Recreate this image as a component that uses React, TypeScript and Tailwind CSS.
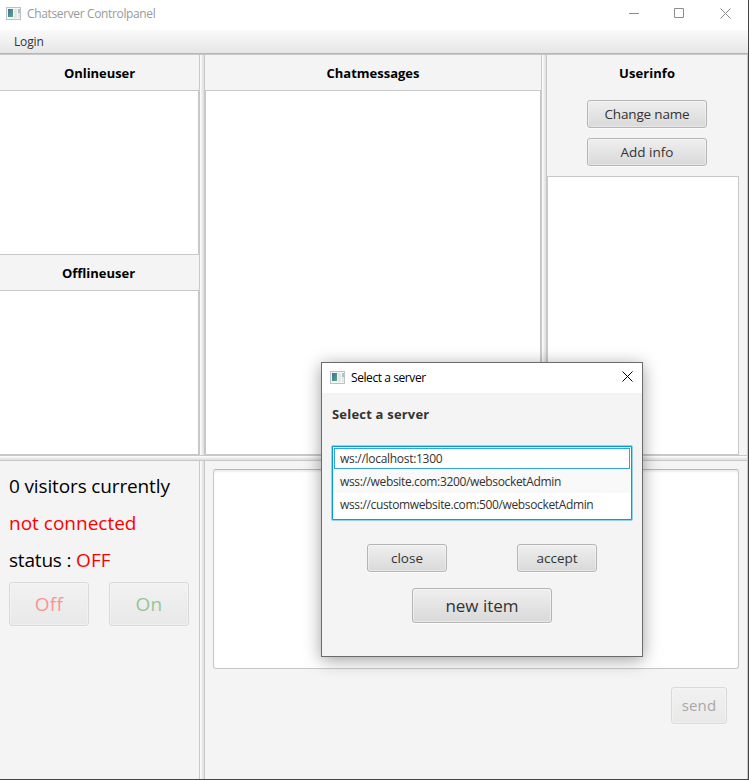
import type { ReactNode } from "react";

function AppIcon() {
  return (
    <svg width="16" height="16" viewBox="0 0 16 16" className="block shrink-0" shapeRendering="crispEdges">
      <defs>
        <linearGradient id="pane" x1="0" y1="0" x2="1" y2="1">
          <stop offset="0" stopColor="#3f6da0" />
          <stop offset="1" stopColor="#55ac80" />
        </linearGradient>
      </defs>
      <rect x="0" y="1" width="15" height="13" fill="#bcc3c8" />
      <rect x="1" y="2" width="13" height="11" fill="#f6f6f6" />
      <rect x="2" y="3" width="5" height="8" fill="url(#pane)" />
      <rect x="8" y="3" width="3" height="9" fill="#e6e6e6" />
      <rect x="12" y="3" width="2" height="4" fill="#a3c9c3" />
      <rect x="12" y="7" width="2" height="5" fill="#e6e6e6" />
    </svg>
  );
}

function Button({
  className,
  disabled = false,
  children,
}: {
  className: string;
  disabled?: boolean;
  children: ReactNode;
}) {
  return (
    <button
      disabled={disabled}
      className={`flex shrink-0 items-center justify-center whitespace-nowrap rounded-[3px] border border-[#b5b5b5] bg-linear-to-b from-[#efefef] to-[#d9d9d9] shadow-[inset_0_0_0_1px_rgba(255,255,255,0.4),0_1px_0_rgba(255,255,255,0.8)] disabled:opacity-40 ${className}`}
    >
      {children}
    </button>
  );
}

function VSplit() {
  return <div className="w-1.5 shrink-0 border-x border-[#c8c8c8] bg-linear-to-r from-white to-[#dcdcdc]" />;
}

function Heading({ className = "", children }: { className?: string; children: ReactNode }) {
  return (
    <h2 className={`flex h-[35px] shrink-0 items-center justify-center pt-0.5 text-[13px] font-bold text-black ${className}`}>
      {children}
    </h2>
  );
}

function ServerDialog() {
  return (
    <div className="absolute left-[321px] top-[362px] flex h-[295px] w-[322px] flex-col border border-[#6b6b6b] bg-[#f4f4f4] text-[#333] shadow-[0_3px_16px_rgba(0,0,0,0.38)]">
      <div className="flex h-[30px] shrink-0 items-center bg-white pl-2 pr-[9px]">
        <div className="-mt-px">
          <AppIcon />
        </div>
        <span className="ml-[5px] flex-1 text-[12px] tracking-[-0.42px] text-black">Select a server</span>
        <svg width="11" height="11" viewBox="0 0 11 11" className="-mt-[3px] block" stroke="#000" strokeWidth="1">
          <path d="M0.5 0.5 10.5 10.5M10.5 0.5 0.5 10.5" />
        </svg>
      </div>
      <h2 className="ml-2.5 mt-[11px] h-5 shrink-0 text-[13px] font-bold leading-5 tracking-[0.2px]">Select a server</h2>
      <ul className="ml-[9px] mt-[21px] h-[76px] w-[302px] shrink-0 rounded-[2px] border border-[#93d3ea] bg-[#039ed3] p-px text-[12px]">
        <li className="h-[23px] bg-white px-px pt-px">
          <span className="flex h-[21px] w-full items-center border border-[#2fa6d3] pl-[5px] tracking-[-0.29px]">
            ws://localhost:1300
          </span>
        </li>
        <li className="flex h-[23px] items-center bg-[#f9f9f9] pl-[7px] tracking-[-0.35px]">
          wss://website.com:3200/websocketAdmin
        </li>
        <li className="h-[26px] bg-white pl-[7px] leading-[23px] tracking-[-0.36px]">
          wss://customwebsite.com:500/websocketAdmin
        </li>
      </ul>
      <div className="mt-[23px] flex justify-between px-[45px] text-[13.5px]">
        <Button className="h-7 w-20 pt-px">close</Button>
        <Button className="h-7 w-20 pt-px">accept</Button>
      </div>
      <Button className="ml-[90px] mt-4 h-[35px] w-[140px] text-[17px]">new item</Button>
    </div>
  );
}

export default function App() {
  return (
    <div className="relative flex h-[780px] w-[749px] flex-col overflow-hidden border-b border-r border-[#444] bg-[#f4f4f4] font-['Open_Sans','Noto_Sans',sans-serif] text-[#333]">
      <header className="flex h-[30px] shrink-0 items-center bg-white pl-1.5 pr-[17px]">
        <div className="-mt-[3px]">
          <AppIcon />
        </div>
        <span className="-mt-0.5 ml-[5px] flex-1 text-[12px] tracking-[-0.36px] text-[#999]">
          Chatserver Controlpanel
        </span>
        <svg
          width="102"
          height="11"
          viewBox="0 0 102 11"
          className="-mt-[3px] block"
          fill="none"
          stroke="#8c8c8c"
        >
          <path d="M0 5.5H10M45.5 0.5H54.5V9.5H45.5Z" />
          <path d="M91.5 0.5 101.5 10.5M101.5 0.5 91.5 10.5" />
        </svg>
      </header>
      <nav className="flex h-[25px] shrink-0 items-center border-b border-[#c8c8c8] bg-linear-to-b from-[#fafafa] to-[#e5e5e5] pl-3.5 text-[12px] tracking-[-0.15px] shadow-[inset_0_-1px_0_#b5b5b5]">
        Login
      </nav>

      <main className="flex min-h-0 flex-1 flex-col border-r border-[#c8c8c8]">
        <section className="flex h-[400px] shrink-0">
          <div className="flex w-[199px] shrink-0 flex-col">
            <Heading className="tracking-[-0.06px]">Onlineuser</Heading>
            <div className="h-[165px] border-y border-r border-[#c8c8c8] bg-white" />
            <Heading className="pr-0.5">Offlineuser</Heading>
            <div className="flex-1 border-y border-r border-[#c8c8c8] bg-white" />
          </div>
          <VSplit />
          <div className="flex w-[336px] shrink-0 flex-col">
            <Heading>Chatmessages</Heading>
            <div className="flex-1 border border-[#c8c8c8] bg-white" />
          </div>
          <VSplit />
          <div className="flex min-w-0 flex-1 flex-col">
            <Heading className="tracking-[0.07px]">Userinfo</Heading>
            <div className="ml-10 mt-2.5 flex flex-col gap-2.5 text-[13.5px]">
              <Button className="h-7 w-[120px] pt-px tracking-[-0.16px]">Change name</Button>
              <Button className="h-7 w-[120px] pt-px">Add info</Button>
            </div>
            <div className="mt-2.5 w-48 flex-1 border border-[#c8c8c8] bg-white" />
          </div>
        </section>

        <div className="h-1.5 shrink-0 border-y border-[#c8c8c8] bg-linear-to-b from-white to-[#dcdcdc]" />

        <section className="flex min-h-0 flex-1">
          <div className="w-[199px] shrink-0 pl-[9px] pt-[7px] text-[19px] text-black">
            <p className="h-[37px] leading-[37px] tracking-[-0.14px]">0 visitors currently</p>
            <p className="h-[37px] leading-[37px] text-[#f00]">not connected</p>
            <p className="h-[37px] leading-[37px] tracking-[-0.19px]">
              status : <span className="tracking-[0.1px] text-[#f00]">OFF</span>
            </p>
            <div className="mt-[3px] flex gap-5">
              <Button disabled className="h-11 w-20 tracking-[0.3px] text-[#f00]">
                Off
              </Button>
              <Button disabled className="h-11 w-20 tracking-[0.3px] text-[#008000]">
                On
              </Button>
            </div>
          </div>
          <VSplit />
          <div className="flex-1 pl-2 pt-2">
            <div className="h-[200px] w-[526px] rounded-[3px] border border-t-[#b5b5b5] border-[#c8c8c8] bg-white shadow-[inset_0_2px_2px_rgba(0,0,0,0.07)]" />
            <div className="ml-[458px] mt-[18px]">
              <Button disabled className="h-[37px] w-14 text-[15px] tracking-[0.2px]">
                send
              </Button>
            </div>
          </div>
        </section>
      </main>

      <ServerDialog />
    </div>
  );
}
